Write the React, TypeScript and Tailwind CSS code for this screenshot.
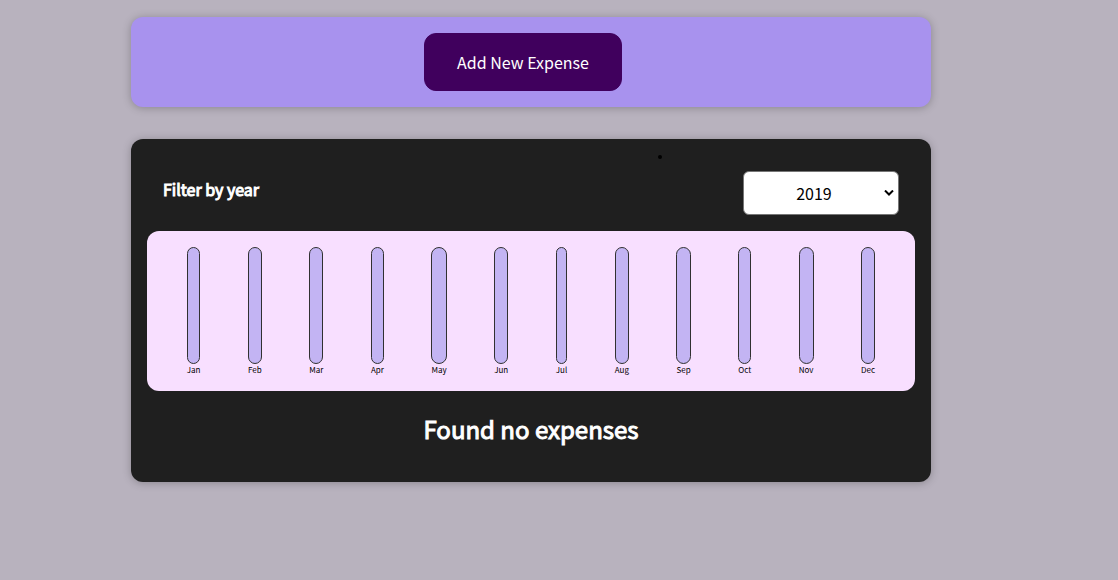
import { useState } from "react";

const months = ["Jan", "Feb", "Mar", "Apr", "May", "Jun", "Jul", "Aug", "Sep", "Oct", "Nov", "Dec"];
const years = ["2022", "2021", "2020", "2019"];

function NewExpense() {
  return (
    <section className="flex w-full max-w-[800px] justify-center rounded-xl bg-[#a892ee] p-4 pr-8 shadow-[0_1px_8px_rgba(0,0,0,0.25)]">
      <button
        type="button"
        className="cursor-pointer rounded-xl border border-[#40005d] bg-[#40005d] px-8 py-4 text-base leading-6 text-white"
      >
        Add New Expense
      </button>
    </section>
  );
}

function YearFilter() {
  const [year, setYear] = useState("2019");
  return (
    <div className="flex items-start justify-between p-4">
      <label htmlFor="year" className="pt-1.5 text-base leading-6 text-white [-webkit-text-stroke:1px_white]">
        Filter by year
      </label>
      <div className="relative">
        <select
          id="year"
          value={year}
          onChange={(event) => setYear(event.target.value)}
          className="h-11 w-39 appearance-none rounded-md border border-[#767676] bg-white pr-3.5 text-center text-base text-black"
        >
          {years.map((option) => (
            <option key={option}>{option}</option>
          ))}
        </select>
        <svg
          viewBox="0 0 10 6"
          className="pointer-events-none absolute top-[19px] right-[5px] h-1.5 w-2.5"
          fill="none"
          stroke="black"
          strokeWidth="2"
        >
          <path d="M1 0.5l4 4 4-4" />
        </svg>
      </div>
    </div>
  );
}

function Chart() {
  return (
    <div className="flex h-40 justify-around rounded-xl bg-[#f8dfff] p-4 text-center">
      {months.map((month) => (
        <div key={month} className="flex flex-col">
          <div className="grow rounded-xl border border-[#313131] bg-[#c3b4f3]" />
          <div className="text-[8px] leading-[11px] text-black">{month}</div>
        </div>
      ))}
    </div>
  );
}

function Expenses() {
  return (
    <section className="relative w-full max-w-[800px] rounded-xl bg-[#1f1f1f] p-4 pb-9 shadow-[0_1px_8px_rgba(0,0,0,0.25)]">
      <span className="absolute top-4 left-[calc(50%+127px)] size-1 rounded-full bg-black" />
      <YearFilter />
      <Chart />
      <h2 className="pt-5 text-center text-2xl leading-[35px] text-white [-webkit-text-stroke:1px_white]">
        Found no expenses
      </h2>
    </section>
  );
}

export default function App() {
  return (
    <main className="flex min-h-screen flex-col items-center gap-8 bg-[#b8b2be] py-[17px] pr-14 font-['Noto_Sans_CJK_JP','Noto_Sans',sans-serif]">
      <NewExpense />
      <Expenses />
    </main>
  );
}
